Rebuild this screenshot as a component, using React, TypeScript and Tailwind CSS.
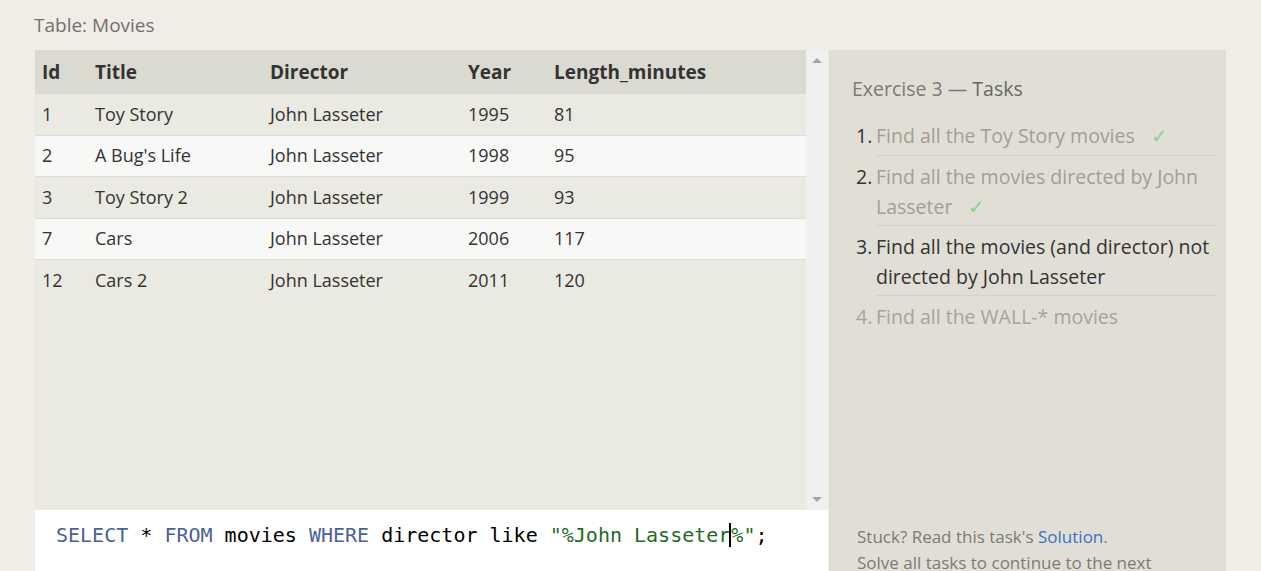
const rows = [
  { id: "1", title: "Toy Story", director: "John Lasseter", year: "1995", len: "81" },
  { id: "2", title: "A Bug's Life", director: "John Lasseter", year: "1998", len: "95" },
  { id: "3", title: "Toy Story 2", director: "John Lasseter", year: "1999", len: "93" },
  { id: "7", title: "Cars", director: "John Lasseter", year: "2006", len: "117" },
  { id: "12", title: "Cars 2", director: "John Lasseter", year: "2011", len: "120" },
];

function Check() {
  return <span className="ml-4 inline-block text-[#8fcf8f]">✓</span>;
}

export default function App() {
  return (
    <main className="h-[571px] overflow-hidden bg-[#f0ede6] font-['Open_Sans',sans-serif]">
      <div className="pl-[34px] pt-[10px] text-[19px] leading-[30px] text-[#707070]">Table: Movies</div>
      <div className="mt-[10px] flex pl-[35px]">
        {/* left: table + editor */}
        <div className="flex w-[793px] flex-col">
          <div className="flex h-[460px]">
            <div className="flex-1 bg-[#eae9e2]">
              <div className="grid h-[44px] grid-cols-[53px_175px_198px_86px_1fr] items-center bg-[#dbdad0] pl-[7px] text-[19px] font-bold text-[#333]">
                <div>Id</div>
                <div>Title</div>
                <div>Director</div>
                <div>Year</div>
                <div>Length_minutes</div>
              </div>
              {rows.map((r, i) => (
                <div
                  key={r.id}
                  className={`grid h-[41.5px] grid-cols-[53px_175px_198px_86px_1fr] items-center pl-[7px] text-[18px] text-[#333] ${
                    i % 2 === 1 ? "bg-[#f8f8f7]" : "bg-[#eae9e2]"
                  } ${i < rows.length - 1 ? "border-b border-[#dedcd5]" : ""}`}
                >
                  <div>{r.id}</div>
                  <div>{r.title}</div>
                  <div>{r.director}</div>
                  <div>{r.year}</div>
                  <div>{r.len}</div>
                </div>
              ))}
            </div>
            <div className="flex w-[22px] flex-col items-center justify-between bg-[#f0f0f0] py-[8px]">
              <div className="h-0 w-0 border-x-[5px] border-b-[5px] border-x-transparent border-b-[#a3a3a3]" />
              <div className="h-0 w-0 border-x-[5px] border-t-[5px] border-x-transparent border-t-[#a3a3a3]" />
            </div>
          </div>
          <div className="h-[61px] bg-white pl-[21px] pt-[12px] font-['DejaVu_Sans_Mono',monospace] text-[20px] leading-[26px] text-black">
            <span className="text-[#4a5f9c]">SELECT</span> * <span className="text-[#4a5f9c]">FROM</span> movies{" "}
            <span className="text-[#4a5f9c]">WHERE</span> director like{" "}
            <span className="text-[#1f6b1f]">
              "%John Lasseter<span className="border-l-2 border-black -ml-[1px]">%</span>"
            </span>
            ;
          </div>
        </div>
        {/* right: tasks */}
        <div className="ml-[1px] h-[521px] w-[397px] bg-[#e1dfd5] pl-[23px] pr-[10px] pt-[25px]">
          <div className="text-[19.5px] leading-[28px] text-[#7a7a7a]">
            Exercise 3 <span className="text-[#777]">—</span> <span className="text-[#666]">Tasks</span>
          </div>
          <ol className="mt-[18px] text-[19.5px] leading-[30px]">
            <li className="flex">
              <span className="w-[24px] shrink-0 pl-[4px] text-[#333]">1.</span>
              <div className="flex-1 border-b border-[#d4d2c8] pb-[4px] text-[#a09e98]">
                Find all the Toy Story movies
                <Check />
              </div>
            </li>
            <li className="flex">
              <span className="w-[24px] shrink-0 pl-[4px] pt-[6px] text-[#333]">2.</span>
              <div className="flex-1 border-b border-[#d4d2c8] pt-[6px] pb-[4px] leading-[29.5px] text-[#a09e98]">
                Find all the movies directed by John Lasseter
                <Check />
              </div>
            </li>
            <li className="flex">
              <span className="w-[24px] shrink-0 pl-[4px] pt-[6px] text-[#333]">3.</span>
              <div className="flex-1 border-b border-[#d4d2c8] pt-[6px] pb-[4px] leading-[29.5px] text-[#333]">
                Find all the movies (and director) not directed by John Lasseter
              </div>
            </li>
            <li className="flex text-[#a5a39d]">
              <span className="w-[24px] shrink-0 pl-[4px] pt-[6px]">4.</span>
              <div className="flex-1 pt-[6px]">Find all the WALL-* movies</div>
            </li>
          </ol>
          <div className="mt-[192px] pl-[5px] text-[17px] leading-[26px] text-[#7a7a7a]">
            Stuck? Read this task's <span className="text-[#3b6fc4]">Solution</span>.
            <br />
            Solve all tasks to continue to the next
          </div>
        </div>
      </div>
    </main>
  );
}
